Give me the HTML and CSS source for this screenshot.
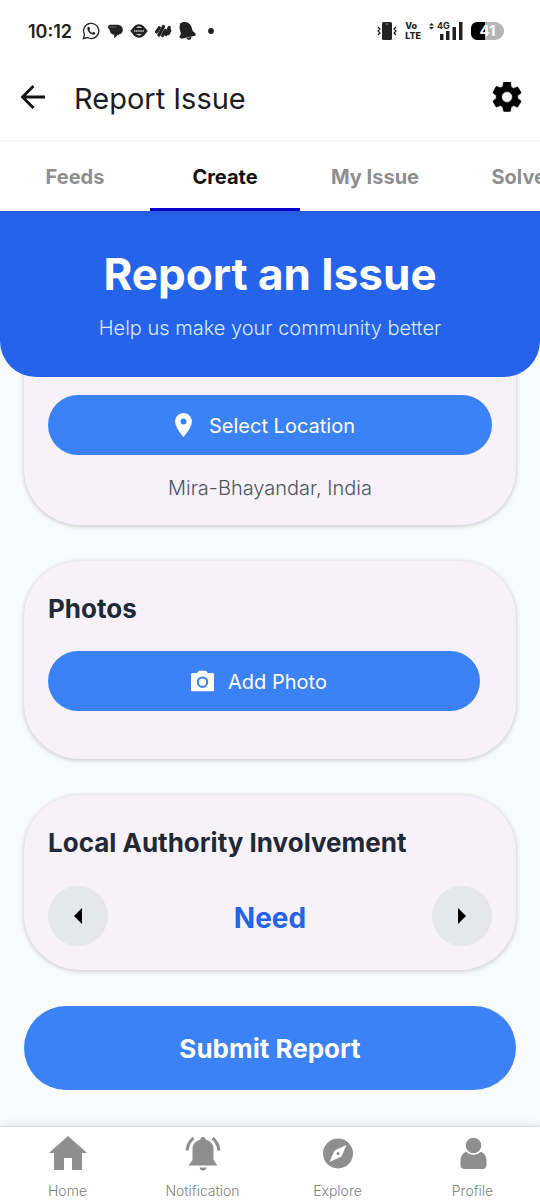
FILE: index.html
```html
<!DOCTYPE html>
<html lang="en">
<head>
<meta charset="utf-8">
<meta name="viewport" content="width=device-width, initial-scale=1">
<title>Report Issue</title>
<link rel="stylesheet" href="styles.css">
</head>
<body>
<div class="app">
  <div class="status">
    <div class="status-group">
      <span class="clock">10:12</span>
      <svg class="status-icon" viewBox="0 0 18 18"><path d="M1.4 16.6l1.1-4.1A7.6 7.6 0 1 1 5.4 15.5z" fill="none" stroke="#222" stroke-width="1.3"/><path d="M6.300 4.800c-1 .6-1.200 1.700-.8 2.900.8 2.300 2.500 4 4.800 4.900 1.200.4 2.400 0 2.900-1.100l.1-.7-2-1-1 1.100c-1.400-.6-2.300-1.500-2.900-2.800l.8-1-.9-2.200z" fill="#222"/></svg>
      <svg class="status-icon" viewBox="0 0 18 18"><path d="M4.500 2.800h6.500c3.700 0 5.800 2.200 5.800 4.900 0 2.800-2.200 4.900-5 5.100L8.200 16.500v-3.700C5.200 12.300 3.600 10.500 3.600 7.800L2 6c0-2 .8-3.200 2.500-3.200z" fill="#222"/><path d="M3.500 5h7" stroke="#888" stroke-width=".7"/></svg>
      <svg class="status-icon" viewBox="0 0 18 18"><circle cx="9" cy="9" r="5.600" fill="none" stroke="#222" stroke-width="2.400"/><path d="M.3 9l2.700-3.200h12L17.700 9 15 12.200H3z" fill="#222"/><path d="M4 9h10" stroke="#ccc" stroke-width="1.300" stroke-dasharray="1.500 .6"/></svg>
      <svg class="status-icon" viewBox="0 0 18 18"><g fill="none" stroke="#222" stroke-width="3.200" stroke-linecap="round"><path d="M2.500 10l2.800-4.200"/><path d="M5 13l4.500-8.500"/><path d="M8.600 13.500l2.600-5"/><path d="M12 12.500l3.300-7"/><path d="M14.300 11.500l1.500-3"/></g></svg>
      <svg class="status-icon" viewBox="0 0 18 18"><path d="M2 1.500l2-1C8-.8 12 .8 13.500 5l1.200 4 3.100 2.700-.5 2-13.800 3.100L1.200 15l1.700-3L1.500 6z" fill="#222"/><path d="M8.500 16l5-1c.2 3-4 4-5 1z" fill="#222"/></svg>
      <svg class="status-icon" viewBox="0 0 18 18"><circle cx="9" cy="9" r="2.900" fill="#222"/></svg>
    </div>
    <div class="status-group status-right">
      <svg class="vibrate" viewBox="0 0 20 18"><rect x="5" y="0" width="10" height="18" rx="1.500" fill="#222"/><path d="M9 2h2" stroke="#999"/><path d="M1 5l2 2-2 2 2 2-2 2M19 5l-2 2 2 2-2 2 2 2" fill="none" stroke="#222" stroke-width="1.200"/></svg>
      <span class="volte"><span>Vo</span><span>LTE</span></span>
      <span class="signal">
        <svg viewBox="0 0 34 18"><path d="M0 3.500L2.500 1 5 3.500zM0 5h5L2.500 7.500zM11 12h3.500v6H11zM17 9h3.500v9H17zM23.500 5H27v13h-3.500zM30 0h3.500v18H30z" fill="#222"/></svg>
        <span class="signal-label">4G</span>
      </span>
      <span class="battery">41</span>
    </div>
  </div>

  <header class="topbar">
    <button class="icon-button" type="button" aria-label="Back">
      <svg class="back" viewBox="0 0 30 24"><path d="M27 12H5M15.500 1L4.500 12l11 11" fill="none" stroke="#111" stroke-width="2.800"/></svg>
    </button>
    <h1 class="title">Report Issue</h1>
    <button class="icon-button" type="button" aria-label="Settings">
      <svg class="gear" viewBox="2 2 20 20"><path fill="#000" d="M19.140 12.940c.04-.3.060-.61.060-.94s-.02-.64-.07-.94l2.030-1.580a.49.49 0 0 0 .12-.61l-1.920-3.320a.488.488 0 0 0-.59-.22l-2.390.96c-.5-.38-1.030-.7-1.620-.94l-.36-2.540A.484.484 0 0 0 13.920 2h-3.840c-.24 0-.43.17-.47.41l-.36 2.540c-.59.24-1.130.57-1.620.94l-2.390-.96a.49.49 0 0 0-.59.22L2.740 8.870c-.12.21-.08.47.12.61l2.030 1.580c-.05.3-.09.630-.09.94s.02.640.07.94l-2.030 1.580a.49.49 0 0 0-.12.61l1.920 3.320c.12.22.37.29.59.22l2.390-.96c.5.38 1.030.7 1.620.94l.36 2.540c.05.240.24.410.48.410h3.840c.24 0 .44-.17.47-.41l.36-2.540c.59-.24 1.130-.56 1.620-.94l2.390.96c.22.080.47 0 .59-.22l1.920-3.320a.49.49 0 0 0-.12-.61zM12 15.600A3.600 3.600 0 1 1 12 8.400a3.600 3.600 0 0 1 0 7.200z" stroke="#000" stroke-width=".4"/></svg>
    </button>
  </header>

  <nav class="tabs" aria-label="Sections">
    <a class="tab" href="#feeds">Feeds</a>
    <a class="tab tab-active" href="#create" aria-current="page">Create</a>
    <a class="tab" href="#mine">My Issue</a>
    <a class="tab" href="#solved">Solved</a>
  </nav>

  <section class="hero">
    <h2 class="hero-title">Report an Issue</h2>
    <p class="hero-text">Help us make your community better</p>
  </section>

  <main class="content">
    <section class="card card-location">
      <button class="pill" type="button">
        <svg class="pin" viewBox="5 2 14 20"><path fill="#fff" d="M12 2C8.130 2 5 5.130 5 9c0 5.250 7 13 7 13s7-7.750 7-13c0-3.870-3.130-7-7-7zm0 9.500a2.500 2.500 0 0 1 0-5 2.500 2.500 0 0 1 0 5z"/></svg>
        <span class="pill-label">Select Location</span>
      </button>
      <p class="place">Mira-Bhayandar, India</p>
    </section>

    <section class="card card-photos">
      <h3 class="card-title">Photos</h3>
      <button class="pill pill-photo" type="button">
        <svg class="camera" viewBox="2 2 20 18"><path fill="#fff" fill-rule="evenodd" d="M9 2L7.170 4H3.200C2.500 4 2 4.500 2 5.200v13.600c0 .7.500 1.200 1.200 1.200h17.600c.7 0 1.200-.5 1.200-1.200V5.200c0-.7-.5-1.200-1.200-1.200h-3.970L15 2zm3 15a5 5 0 1 1 0-10 5 5 0 0 1 0 10z"/><circle cx="12" cy="12" r="3.200" fill="#fff"/></svg>
        <span class="pill-label">Add Photo</span>
      </button>
    </section>

    <section class="card">
      <h3 class="card-title">Local Authority Involvement</h3>
      <div class="picker">
        <button class="step" type="button" aria-label="Previous"><svg viewBox="0 0 8 16"><path d="M8 0v16L0 8z"/></svg></button>
        <span class="picker-value">Need</span>
        <button class="step" type="button" aria-label="Next"><svg viewBox="0 0 8 16"><path d="M0 0v16l8-8z"/></svg></button>
      </div>
    </section>

    <button class="submit" type="submit">Submit Report</button>
  </main>

  <nav class="bottom" aria-label="Main">
    <a class="bottom-item" href="#home">
      <svg viewBox="0 0 40 36"><path d="M20 1L39 18H34V35H24V23H16V35H6V18H1z"/></svg>
      <span>Home</span>
    </a>
    <a class="bottom-item" href="#notification">
      <svg viewBox="0 0 40 36"><path d="M20 2c1.700 0 2.800 1.100 2.800 2.800C27.500 6 30.500 9.500 30.500 14v11l4 5.500h-29l4-5.500V14c0-4.500 3-8 7.700-9.200C17.200 3.100 18.300 2 20 2zM16.500 32.500h7c-.5 4-6.500 4-7 0z"/><path d="M10.500 3Q5 7.500 4 15.500M29.500 3Q35 7.500 36 15.500" fill="none" stroke="#8e8e8e" stroke-width="3"/></svg>
      <span>Notification</span>
    </a>
    <a class="bottom-item" href="#explore">
      <svg viewBox="0 0 40 36"><circle cx="20" cy="18.500" r="15"/><path d="M28.500 10L23.500 21.500 11.500 27 16.500 15.500z" fill="#fff"/><circle cx="20" cy="18.500" r="1.500"/></svg>
      <span>Explore</span>
    </a>
    <a class="bottom-item" href="#profile">
      <svg viewBox="0 0 40 36"><path d="M12.500 17h16c3.500 1.500 5 4.500 5 9v4c0 2.500-1.500 4-4 4h-18c-2.500 0-4-1.500-4-4v-4c0-4.500 1.500-7.500 5-9z"/><circle cx="20.500" cy="10.500" r="8.600" stroke="#fff" stroke-width="1.600"/></svg>
      <span>Profile</span>
    </a>
  </nav>
</div>
</body>
</html>
```
FILE: styles.css
```css
* {
  box-sizing: border-box;
}

body {
  margin: 0;
  background: #f8fafc;
  font-family: Inter, "Liberation Sans", sans-serif;
}

h1, h2, h3, p {
  margin: 0;
}

button {
  border: 0;
  padding: 0;
  background: none;
  font: inherit;
  cursor: pointer;
}

a {
  color: inherit;
  text-decoration: none;
}

.app {
  display: flex;
  flex-direction: column;
  min-height: 100vh;
  overflow: hidden;
}

.status {
  display: flex;
  justify-content: space-between;
  align-items: center;
  height: 62px;
  padding: 0 36px 0 28px;
  background: #fff;
  color: #222;
}

.status-group {
  display: flex;
  align-items: center;
  gap: 6px;
}

.status-right {
  gap: 8px;
}

.clock {
  margin-right: 4px;
  font-size: 18px;
  font-weight: 600;
}

.status-icon {
  width: 18px;
  height: 18px;
}

.vibrate {
  width: 20px;
  height: 18px;
}

.volte {
  display: grid;
  font-size: 9px;
  line-height: 10px;
  font-weight: 800;
}

.signal {
  position: relative;
  display: flex;
}

.signal svg {
  width: 34px;
  height: 18px;
}

.signal-label {
  position: absolute;
  left: 8px;
  top: -1px;
  font-size: 9px;
  line-height: 10px;
  font-weight: 700;
}

.battery {
  width: 33px;
  border-radius: 6px 9px 9px 6px;
  background: linear-gradient(90deg, #000 42%, #b5b5b5 42%);
  color: #fff;
  font-size: 15px;
  line-height: 18px;
  font-weight: 700;
  text-align: center;
}

.topbar {
  display: flex;
  align-items: center;
  height: 79px;
  padding: 0 18px 8px;
  border-bottom: 1px solid #f7f7f7;
  background: #fff;
}

.icon-button {
  display: flex;
}

.back {
  width: 30px;
  height: 24px;
}

.gear {
  width: 30px;
  height: 30px;
}

.title {
  flex: 1;
  padding: 2px 0 0 26px;
  color: #1c1b1f;
  font-size: 29px;
  font-weight: 400;
}

.tabs {
  display: flex;
  height: 70px;
  background: #fff;
  overflow: hidden;
}

.tab {
  display: flex;
  flex: 0 0 150px;
  align-items: center;
  justify-content: center;
  padding-top: 4px;
  border-bottom: 3px solid transparent;
  color: #8e8e8e;
  font-size: 20px;
  font-weight: 700;
}

.tab-active {
  border-color: #0000cd;
  color: #111;
}

.hero {
  position: relative;
  z-index: 1;
  padding: 36px 24px;
  border-radius: 0 0 36px 36px;
  background: linear-gradient(#235bd8, #2563eb 6px);
  text-align: center;
}

.hero-title {
  color: #fff;
  font-size: 44px;
  line-height: 54px;
  font-weight: 700;
}

.hero-text {
  padding-top: 14px;
  color: #dbeafe;
  font-size: 20px;
  line-height: 26px;
  font-weight: 300;
}

.content {
  display: flex;
  flex: 1;
  flex-direction: column;
  gap: 36px;
  margin-top: -36px;
  padding: 0 24px 36px;
}

.card {
  padding: 30px 24px 24px;
  border-radius: 56px;
  background: #f7f2f9;
  box-shadow: 0 1px 5px rgba(0, 0, 0, 0.22);
}

.card-location {
  border-radius: 0 0 56px 56px;
  padding-top: 54px;
}

.card-photos {
  padding-bottom: 48px;
}

.pill {
  display: flex;
  align-items: center;
  justify-content: center;
  width: 100%;
  height: 60px;
  padding-right: 10px;
  border-radius: 30px;
  background: #3b82f6;
  color: #fff;
  font-size: 20px;
}

.pill-label {
  padding-top: 2px;
}

.pin {
  width: 17px;
  height: 24px;
  margin-right: 17px;
}

.camera {
  width: 23px;
  height: 22px;
  margin-right: 14px;
}

.pill-photo {
  width: calc(100% - 12px);
  margin-top: 24px;
}

.place {
  padding-top: 20px;
  color: #4b5563;
  font-size: 20px;
  line-height: 26px;
  font-weight: 300;
  text-align: center;
}

.card-title {
  color: #1f2937;
  font-size: 26px;
  line-height: 36px;
  font-weight: 700;
}

.picker {
  display: flex;
  align-items: center;
  justify-content: space-between;
  padding-top: 25px;
}

.picker-value {
  padding-top: 4px;
  color: #2563eb;
  font-size: 28px;
  font-weight: 700;
}

.step {
  display: grid;
  place-items: center;
  width: 60px;
  height: 60px;
  border-radius: 50%;
  background: #e5e7eb;
}

.step svg {
  width: 8px;
  height: 16px;
}

.submit {
  height: 84px;
  border-radius: 42px;
  background: #3b82f6;
  color: #fff;
  font-size: 26px;
  font-weight: 700;
}

.bottom {
  display: grid;
  grid-template-columns: repeat(4, 1fr);
  height: 73px;
  padding-top: 8px;
  background: #fff;
  box-shadow: 0 -1px 2px rgba(0, 0, 0, 0.1), 0 -2px 10px rgba(0, 0, 0, 0.08);
}

.bottom-item {
  display: flex;
  flex-direction: column;
  align-items: center;
  gap: 10px;
  color: #808080;
  font-size: 14px;
  line-height: 20px;
  font-weight: 300;
}

.bottom-item svg {
  width: 40px;
  height: 36px;
  fill: #8e8e8e;
}
```
